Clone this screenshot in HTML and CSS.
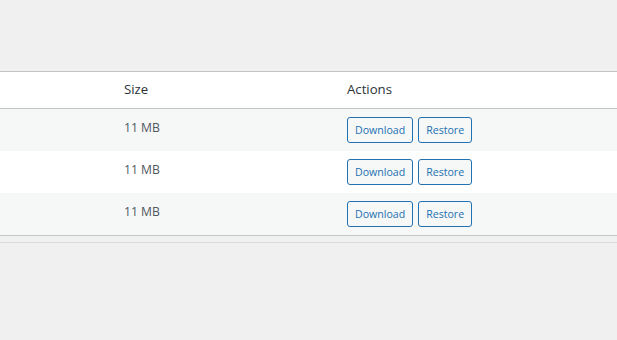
FILE: index.html
```html
<!DOCTYPE html>
<html>
<head>
<meta charset="utf-8">
<link rel="stylesheet" href="styles.css">
</head>
<body>
<div class="wrap">
  <table class="widefat">
    <thead>
      <tr>
        <th class="col-name"></th>
        <th class="col-size">Size</th>
        <th class="col-actions">Actions</th>
      </tr>
    </thead>
    <tbody>
      <tr class="alt">
        <td></td>
        <td>11 MB</td>
        <td><button class="btn">Download</button><button class="btn">Restore</button></td>
      </tr>
      <tr>
        <td></td>
        <td>11 MB</td>
        <td><button class="btn">Download</button><button class="btn">Restore</button></td>
      </tr>
      <tr class="alt">
        <td></td>
        <td>11 MB</td>
        <td><button class="btn">Download</button><button class="btn">Restore</button></td>
      </tr>
    </tbody>
  </table>
  <div class="foot"></div>
</div>
</body>
</html>
```
FILE: styles.css
```css
html, body {
  margin: 0;
  padding: 0;
  background: #f0f0f1;
  font-family: "Open Sans", "Noto Sans", sans-serif;
  color: #3c434a;
}
.wrap {
  padding-top: 71px;
}
.widefat {
  width: 100%;
  border-collapse: collapse;
  border-spacing: 0;
  background: #fff;
  border-top: 1px solid #c3c4c7;
  border-bottom: 1px solid #c3c4c7;
}
.widefat th {
  text-align: left;
  font-weight: 400;
  font-size: 13.2px;
  line-height: 19px;
  padding: 8px 10px 9px;
  color: #2c3338;
  border-bottom: 1px solid #c3c4c7;
}
.col-name { width: 94px; }
.col-size { width: 203px; }
.widefat td {
  font-size: 12.2px;
  line-height: 21px;
  padding: 8px 10px 8px;
  vertical-align: top;
  color: #50575e;
  height: 26px;
}
.widefat tr.alt td { background: #f6f7f7; }
.btn {
  font-family: "Open Sans", "Noto Sans", sans-serif;
  font-size: 10.6px;
  height: 26px;
  padding: 0 7px;
  margin: 0 5px 0 0;
  border: 1px solid #2271b1;
  border-radius: 3px;
  background: #f6f7f7;
  color: #2271b1;
  cursor: pointer;
  vertical-align: top;
}
.foot {
  margin-top: 6px;
  border-top: 1px solid #dcdcde;
}
```
